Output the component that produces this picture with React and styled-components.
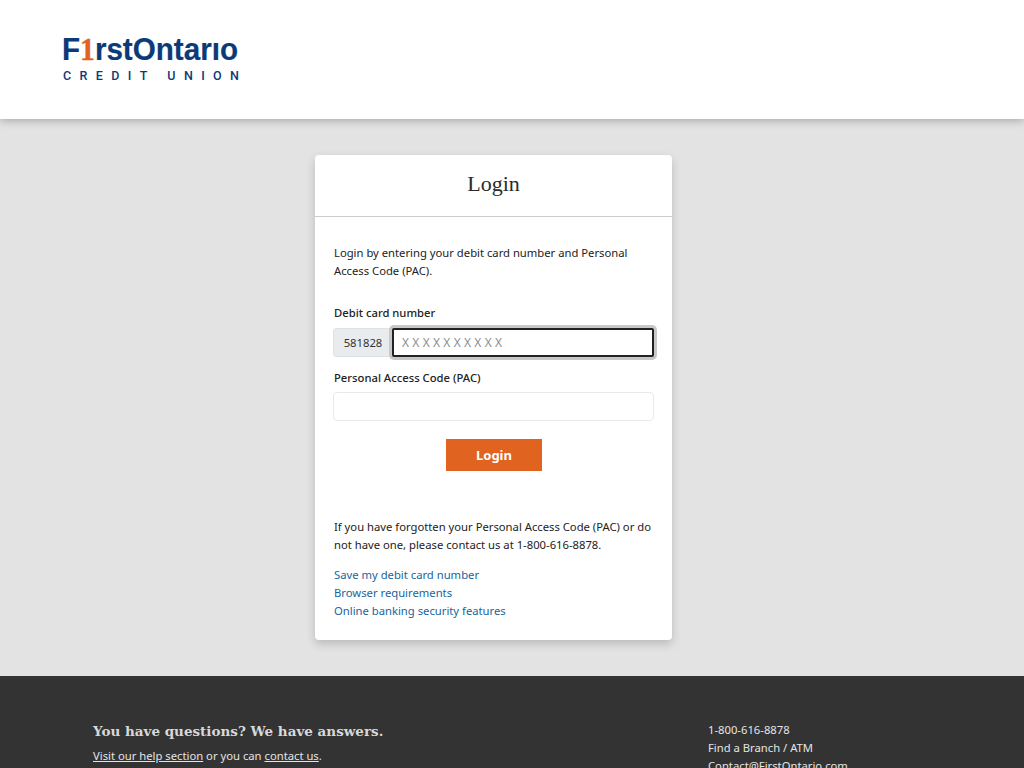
import React from 'react';
import styled, { createGlobalStyle } from 'styled-components';

const GlobalStyle = createGlobalStyle`
  html, body {
    margin: 0;
    height: 768px;
    overflow: hidden;
  }
  body {
    font-family: "Noto Sans", "Liberation Sans", sans-serif;
    font-size: 11.25px;
    line-height: 18px;
    color: #222;
    background: #e3e3e3;
  }
  * { box-sizing: border-box; }
`;

const Header = styled.header`
  height: 119px;
  background: #fff;
  padding: 36px 0 0 63px;
  box-shadow: 0 2px 8px rgba(0, 0, 0, 0.25);
  position: relative;
`;

const Logo = styled.div`
  width: 176px;
  color: #0b3a78;
`;

const LogoName = styled.div`
  margin-left: -1px;
  font-family: "Liberation Sans", Arial, sans-serif;
  font-weight: 700;
  font-size: 31px;
  line-height: 28px;
  white-space: nowrap;
  transform: scaleX(0.955);
  transform-origin: left center;
  -webkit-text-stroke: 0.2px #0b3a78;
`;

const LogoOne = styled.span`
  font-family: "Liberation Serif", serif;
  color: #e0641f;
  -webkit-text-stroke: 0.4px #e0641f;
`;

const LogoSub = styled.div`
  display: flex;
  justify-content: space-between;
  margin-top: 6px;
  font-family: Roboto, "Liberation Sans", sans-serif;
  font-size: 12.5px;
  line-height: 12px;
  font-weight: 500;
`;

const Main = styled.main`
  display: flex;
  padding: 36px 0 36px 315px;
`;

const Card = styled.section`
  width: 357px;
  height: 485px;
  background: #fff;
  border-radius: 4px;
  box-shadow: 0 4px 10px rgba(0, 0, 0, 0.18);
`;

const CardTitle = styled.h1`
  margin: 0;
  height: 62px;
  border-bottom: 1px solid #ccc;
  font-family: "Liberation Serif", "Times New Roman", serif;
  font-size: 22px;
  font-weight: 400;
  line-height: 58px;
  text-align: center;
  color: #2b2b2b;
`;

const CardBody = styled.div`
  padding: 27px 18px 0 19px;
`;

const Text = styled.p`
  margin: 0;
`;

const Label = styled.label`
  display: block;
  margin: ${(p) => p.$top}px 0 ${(p) => p.$bottom}px;
  font-weight: 500;
  color: #222;
`;

const InputRow = styled.div`
  display: flex;
  margin-left: -1px;
`;

const Prefix = styled.span`
  width: 59px;
  height: 29px;
  background: #e9ecef;
  border: 1px solid #dee2e6;
  border-right: 0;
  border-radius: 4px 0 0 4px;
  line-height: 27px;
  text-align: center;
  color: #333;
`;

const CardInput = styled.input`
  flex: 1;
  min-width: 0;
  height: 29px;
  padding: 0 0 0 8px;
  background: #fff;
  border: 2px solid #222;
  border-radius: 2px;
  outline: 0;
  box-shadow: 0 0 0 3px #c8c8c8;
  font-family: inherit;
  font-size: 12px;
  letter-spacing: 3.3px;
  &::placeholder {
    color: #8a8f94;
    opacity: 1;
  }
`;

const PacInput = styled.input`
  display: block;
  width: calc(100% + 1px);
  height: 29px;
  margin-left: -1px;
  padding: 0;
  background: #fff;
  border: 1px solid #e6eaee;
  border-radius: 4px;
  outline: 0;
`;

const ButtonRow = styled.div`
  display: flex;
  justify-content: center;
  margin-top: 18px;
`;

const LoginButton = styled.button`
  width: 96px;
  height: 32px;
  border: 0;
  padding: 0;
  background: #e0641f;
  color: #fff;
  font-family: inherit;
  font-size: 13px;
  font-weight: 700;
`;

const HelpText = styled(Text)`
  margin-top: 47px;
`;

const Links = styled.div`
  display: flex;
  flex-direction: column;
  margin-top: 12px;
`;

const CardLink = styled.a`
  color: #17659e;
  text-decoration: none;
`;

const Footer = styled.footer`
  height: 300px;
  background: #333;
  color: #e4e4e4;
  padding: 45px 0 0 93px;
  display: flex;
`;

const FooterLeft = styled.div`
  width: 615px;
`;

const FooterTitle = styled.h2`
  margin: 0 0 6px;
  font-family: "DejaVu Serif", "Liberation Serif", serif;
  font-size: 13.5px;
  line-height: 20px;
  font-weight: 700;
  color: #d8d8d8;
`;

const FooterLink = styled.a`
  color: inherit;
  text-decoration: underline;
`;

const FooterContact = styled.div`
  display: flex;
  flex-direction: column;
`;

export default function App() {
  return (
    <>
      <GlobalStyle />
      <Header>
        <Logo>
          <LogoName>F<LogoOne>1</LogoOne>rstOntarıo</LogoName>
          <LogoSub>
            {'CREDIT'.split('').map((c, i) => <span key={i}>{c}</span>)}
            <span>&nbsp;</span>
            {'UNION'.split('').map((c, i) => <span key={i}>{c}</span>)}
          </LogoSub>
        </Logo>
      </Header>
      <Main>
        <Card>
          <CardTitle>Login</CardTitle>
          <CardBody>
            <Text>Login by entering your debit card number and Personal Access Code (PAC).</Text>
            <Label $top={24} $bottom={6}>Debit card number</Label>
            <InputRow>
              <Prefix>581828</Prefix>
              <CardInput placeholder="XXXXXXXXXX" />
            </InputRow>
            <Label $top={12} $bottom={5}>Personal Access Code (PAC)</Label>
            <PacInput />
            <ButtonRow>
              <LoginButton>Login</LoginButton>
            </ButtonRow>
            <HelpText>If you have forgotten your Personal Access Code (PAC) or do not have one, please contact us at 1-800-616-8878.</HelpText>
            <Links>
              <CardLink href="#">Save my debit card number</CardLink>
              <CardLink href="#">Browser requirements</CardLink>
              <CardLink href="#">Online banking security features</CardLink>
            </Links>
          </CardBody>
        </Card>
      </Main>
      <Footer>
        <FooterLeft>
          <FooterTitle>You have questions? We have answers.</FooterTitle>
          <Text><FooterLink href="#">Visit our help section</FooterLink> or you can <FooterLink href="#">contact us</FooterLink>.</Text>
        </FooterLeft>
        <FooterContact>
          <span>1-800-616-8878</span>
          <span>Find a Branch / ATM</span>
          <span>Contact@FirstOntario.com</span>
        </FooterContact>
      </Footer>
    </>
  );
}
